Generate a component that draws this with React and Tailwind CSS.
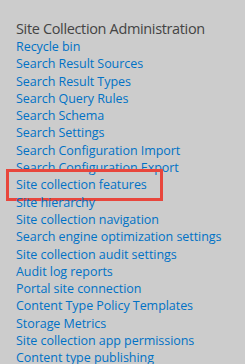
import React from "react";

const links = [
  "Recycle bin",
  "Search Result Sources",
  "Search Result Types",
  "Search Query Rules",
  "Search Schema",
  "Search Settings",
  "Search Configuration Import",
  "Search Configuration Export",
  "Site collection features",
  "Site hierarchy",
  "Site collection navigation",
  "Search engine optimization settings",
  "Site collection audit settings",
  "Audit log reports",
  "Portal site connection",
  "Content Type Policy Templates",
  "Storage Metrics",
  "Site collection app permissions",
  "Content type publishing",
];

export default function App() {
  return (
    <div
      className="w-[245px] h-[364px] overflow-hidden bg-[#cccccc] pl-4 pt-[19px]"
      style={{ fontFamily: '"Open Sans", "Segoe UI", sans-serif' }}
    >
      <h3 className="text-[14.5px] leading-[19px] tracking-[-0.35px] text-[#444444] font-normal">
        Site Collection Administration
      </h3>
      <ul>
        {links.map((label) => (
          <li key={label} className="relative text-[12.5px] leading-[17.3px] tracking-[-0.05px] whitespace-nowrap">
            <a href="#" className="text-[#0072c6]">
              {label}
            </a>
            {label === "Site collection features" && (
              <span className="absolute left-[-10px] top-[-7px] w-[157px] h-[32px] border-[3px] border-[#e8463c]" />
            )}
          </li>
        ))}
      </ul>
    </div>
  );
}
